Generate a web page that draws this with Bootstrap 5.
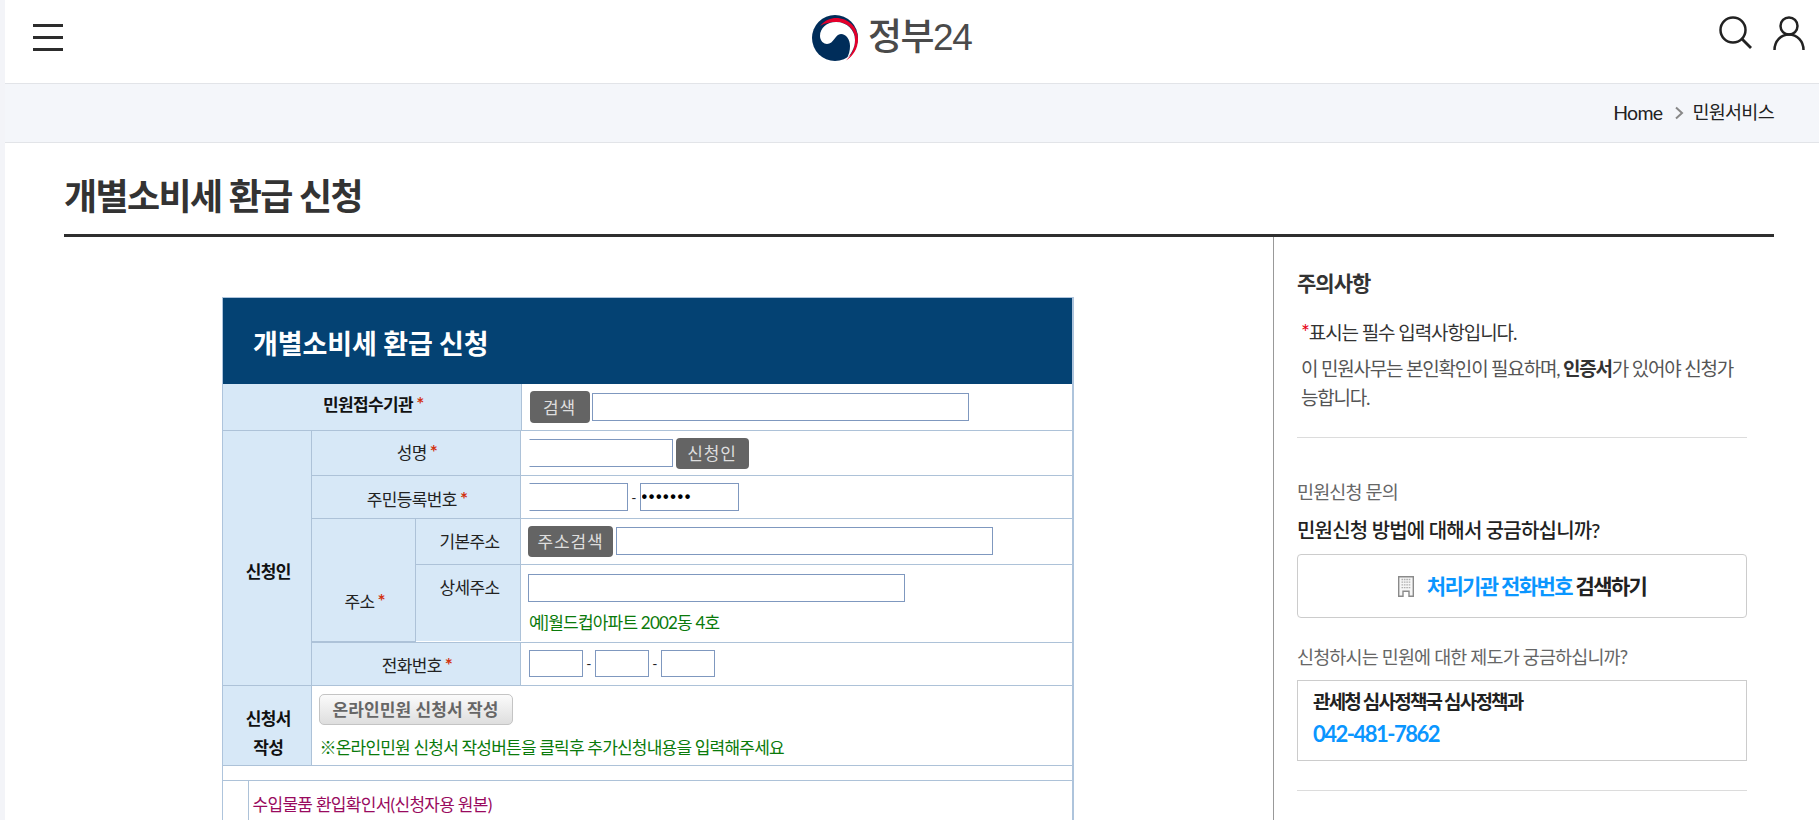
<!DOCTYPE html>
<html lang="ko">
<head>
<meta charset="utf-8">
<title>개별소비세 환급 신청</title>
<link href="https://cdn.jsdelivr.net/npm/bootstrap@5.3.0/dist/css/bootstrap.min.css" rel="stylesheet">
<style>
html,body{height:820px;overflow:hidden;background:#fff;}
body{font-family:"Lato","Noto Sans CJK KR",sans-serif;color:#222;border-left:5px solid #f3f4f8;letter-spacing:-.6px;}
.top-head{height:84px;border-bottom:1px solid #e2e4e8;padding:0 14px 8px 28px;}
.top-left{width:779px;}
.top-right{flex:1;margin-bottom:9px;gap:21px;}
.logo-gap{gap:10px;}
.logo-name{font-size:37px;font-weight:500;color:#4a4a4a;line-height:1;letter-spacing:-1.5px;font-family:"Liberation Sans","Noto Sans CJK KR",sans-serif;}
.crumb-bar{height:59px;background:#f4f6fa;border-bottom:1px solid #e2e4e8;padding-right:45px;font-size:18.500px;color:#222;letter-spacing:-.7px;}
.crumb-home{font-size:19.500px;}
.crumb-sep{margin:0 8px 0 12px;}
.page-area{padding:0 45px 0 59px;}
.page-title{height:94px;border-bottom:3px solid #2e2e2e;margin:0;font-size:36px;font-weight:700;color:#333;letter-spacing:-1.6px;padding-top:26px;line-height:54px;}
.main-col{width:1209px;padding:60px 0 0 158px;flex:none;}
.side-col{flex:1;border-left:1px solid #999;padding:33px 27px 0 23px;height:600px;}
.form-box{width:852px;border:1px solid #aec4dc;border-right-width:2px;}
.form-head{height:86px;background:#044273;color:#fff;font-size:27px;font-weight:700;letter-spacing:-.1px;padding:7px 0 0 30px;}
.form-tb{width:100%;table-layout:fixed;border-collapse:collapse;font-size:17px;}
.form-tb th,.form-tb td{border:1px solid #adc2d8;padding:0;vertical-align:middle;}
.form-tb th{background:#d7e8f7;text-align:center;font-weight:400;color:#222;padding-left:3px;}
.form-tb tr:first-child>*{border-top:0;}
.form-tb tr>:first-child{border-left:0;}
.form-tb tr>:last-child{border-right:0;}
.form-tb tr:last-child>*{border-bottom:0;}
.form-tb th.strong-head{font-weight:700;color:#111;}
.form-tb th.head-org{padding-bottom:4px;}
.form-tb th.head-low{padding-top:5px;}
.line-above{border-top:1px solid #adc2d8;}
.gap-row{height:15px;border-top:1px solid #adc2d8;}
.form-tb th.head-applicant{padding-top:28px;}
.form-tb th.head-write{padding-top:16px;line-height:29px;}
.form-tb th.head-addr{padding-top:44px;}
.form-tb th.head-detail{vertical-align:top;padding-top:10px;}
.req{color:#d2320f;font-weight:700;margin-left:3px;font-size:19px;line-height:0;}
.fld{height:28px;border:1px solid #7f98bf;background:#fff;padding:0 2px;font-size:13px;display:block;outline:0;border-radius:0;letter-spacing:0;font-family:"Liberation Sans",sans-serif;}
.fld-noleft{border-left-color:#fff;}
.fld-long{width:377px;margin-left:2px;}
.fld-long2{width:377px;margin-left:3px;}
.fld-name{width:144px;}
.fld-rrn{width:99px;}
.fld-dots{padding:0 0 0 1px;font-size:16px;font-weight:700;letter-spacing:1.600px;color:#000;}
.fld-detail{width:377px;margin-left:-1px;}
.fld-tel{width:54px;height:27px;}
.btn-dark-mini{background:#646464;color:#dedede;border:0;border-radius:4px;height:32px;font-size:17px;letter-spacing:.8px;padding:0;line-height:1;flex:none;}
.btn-srch{width:60px;}
.btn-app{width:73px;height:31px;margin-left:3px;}
.btn-addr{width:85px;height:31px;margin-left:-1px;}
.btn-pale{height:31px;width:194px;background:linear-gradient(#fbfbfb,#dedede);border:1px solid #c4c4c4;border-radius:5px;font-size:17px;color:#666;font-weight:700;padding:0;letter-spacing:.1px;line-height:1;margin-left:-1px;}
.hint-green{color:#0a7a0a;font-size:17px;line-height:17px;letter-spacing:-.8px;}
.hint-gap1{margin-top:12px;}
.hint-gap2{margin-top:14px;}
.dash{font-size:14px;color:#222;width:12px;text-align:center;flex:none;}
.form-tb td.purple-cell{vertical-align:top;padding:11px 0 0 4px;}
.purple-link{color:#990a5e;font-size:17px;letter-spacing:-.7px;line-height:26px;}
.note-title{font-size:21px;font-weight:700;color:#333;line-height:26px;margin:0 0 22px;letter-spacing:-1px;}
.note-p{font-size:19px;line-height:29px;margin:0 0 7px 4px;color:#333;letter-spacing:-1.1px;}
.note-dim{color:#555;margin-bottom:25px;letter-spacing:-1.2px;}
.note-p b{color:#333;}
.star-red{color:#e60012;font-size:21px;line-height:0;}
.rule-line{border-top:1px solid #dcdcdc;}
.q-small{font-size:18.500px;color:#666;line-height:26px;letter-spacing:-.85px;}
.q-a{margin-top:41px;}
.q-b{margin-top:26px;margin-bottom:10px;}
.q-strong{font-size:20px;font-weight:500;color:#222;line-height:26px;letter-spacing:-.8px;margin:12px 0 11px;}
.search-tel{height:64px;border:1px solid #ccc;border-radius:4px;font-size:21px;font-weight:700;color:#222;letter-spacing:-1.6px;text-decoration:none;gap:13px;}
.accent-blue{color:#0a96ff;}
.tel-box{height:81px;border:1px solid #ccc;padding:6px 15px 0;}
.tel-org{font-size:19px;font-weight:700;color:#222;line-height:30px;letter-spacing:-1.800px;}
.tel-num{font-size:22px;font-weight:700;color:#0a96ff;line-height:34px;letter-spacing:-1.500px;}
.rule-last{margin-top:29px;}
</style>
</head>
<body>
<header class="top-head d-flex align-items-center">
  <div class="top-left">
    <svg class="d-block" width="30" height="27" viewBox="0 0 30 27" aria-label="메뉴"><path d="M0 1.500h30M0 13.500h30M0 25.500h30" stroke="#2c2c2c" stroke-width="3"/></svg>
  </div>
  <div class="d-flex align-items-center logo-gap">
    <svg class="d-block" width="46" height="46" viewBox="0 0 46 46" aria-label="정부 로고">
      <circle cx="23" cy="23" r="23" fill="#002d5a"/>
      <path d="M8 11C13 5 19 3 24 3c12 0 22 9 22 21 0 10-5 17-12 21.500 5-5 9-12 9-21C43 14 35 7 24 7 18 7 13 8 8 11Z" fill="#e4002b"/>
      <path d="M8 21C8 13 15 7 24 7c11 0 19 8 19 18 0 8-4 14-9 20 3-5 4-10 4-14 0-7-4-12-9-12-6 0-7 10-14 10-3 0-7-3-7-8Z" fill="#fff"/>
    </svg>
    <span class="logo-name">정부24</span>
  </div>
  <div class="top-right d-flex justify-content-end">
    <svg class="d-block" width="33" height="33" viewBox="0 0 33 33" aria-label="검색"><circle cx="14" cy="14" r="12.500" fill="none" stroke="#222" stroke-width="2.500"/><path d="M23 23l9 9" stroke="#222" stroke-width="2.800"/></svg>
    <svg class="d-block" width="32" height="34" viewBox="0 0 32 34" aria-label="로그인"><circle cx="16" cy="10" r="8.500" fill="none" stroke="#222" stroke-width="2.500"/><path d="M1.500 34C1.500 25 8 18.500 16 18.500S30.500 25 30.500 34" fill="none" stroke="#222" stroke-width="2.500"/></svg>
  </div>
</header>
<nav class="crumb-bar d-flex align-items-center justify-content-end" aria-label="현재 위치">
  <span class="crumb-home">Home</span>
  <svg class="crumb-sep" width="10" height="14" viewBox="0 0 10 14"><path d="M2 1.500L8 7l-6 5.500" fill="none" stroke="#888" stroke-width="2"/></svg>
  <span>민원서비스</span>
</nav>
<div class="page-area">
  <h1 class="page-title">개별소비세 환급 신청</h1>
  <div class="d-flex">
    <main class="main-col">
      <div class="form-box">
        <div class="form-head d-flex align-items-center">개별소비세 환급 신청</div>
        <table class="form-tb">
          <colgroup><col style="width:298px"><col></colgroup>
          <tr style="height:46px">
            <th class="strong-head head-org">민원접수기관<span class="req">*</span></th>
            <td><div class="d-flex align-items-center ps-2"><button type="button" class="btn-dark-mini btn-srch">검색</button><input class="fld fld-long" type="text"></div></td>
          </tr>
        </table>
        <table class="form-tb line-above">
          <colgroup><col style="width:88px"><col style="width:104px"><col style="width:105px"><col></colgroup>
          <tr style="height:45px">
            <th rowspan="4" class="strong-head head-applicant">신청인</th>
            <th colspan="2">성명<span class="req">*</span></th>
            <td><div class="d-flex align-items-center ps-2"><input class="fld fld-noleft fld-name" type="text"><button type="button" class="btn-dark-mini btn-app">신청인</button></div></td>
          </tr>
          <tr style="height:43px">
            <th colspan="2" class="head-low">주민등록번호<span class="req">*</span></th>
            <td><div class="d-flex align-items-center ps-2"><input class="fld fld-noleft fld-rrn" type="text"><span class="dash">-</span><input class="fld fld-rrn fld-dots" type="text" value="•••••••" aria-label="뒷자리"></div></td>
          </tr>
          <tr style="height:122px">
            <td colspan="3">
              <table class="form-tb">
                <colgroup><col style="width:104px"><col style="width:105px"><col></colgroup>
                <tr style="height:45px">
                  <th rowspan="2" class="head-addr">주소<span class="req">*</span></th>
                  <th>기본주소</th>
                  <td><div class="d-flex align-items-center ps-2"><button type="button" class="btn-dark-mini btn-addr">주소검색</button><input class="fld fld-long2" type="text"></div></td>
                </tr>
                <tr style="height:77px">
                  <th class="head-detail">상세주소</th>
                  <td>
                    <div class="ps-2"><input class="fld fld-detail" type="text"><div class="hint-green hint-gap1">예]월드컵아파트 2002동 4호</div></div>
                  </td>
                </tr>
              </table>
            </td>
          </tr>
          <tr style="height:43px">
            <th colspan="2" class="head-low">전화번호<span class="req">*</span></th>
            <td><div class="d-flex align-items-center ps-2"><input class="fld fld-tel" type="text"><span class="dash">-</span><input class="fld fld-tel" type="text"><span class="dash">-</span><input class="fld fld-tel" type="text"></div></td>
          </tr>
          <tr style="height:80px">
            <th class="strong-head head-write">신청서<br>작성</th>
            <td colspan="3">
              <div class="ps-2"><button type="button" class="btn-pale d-block">온라인민원 신청서 작성</button><div class="hint-green hint-gap2">※온라인민원 신청서 작성버튼을 클릭후 추가신청내용을 입력해주세요</div></div>
            </td>
          </tr>
        </table>
        <div class="gap-row"></div>
        <table class="form-tb line-above">
          <colgroup><col style="width:25px"><col></colgroup>
          <tr style="height:60px">
            <td></td>
            <td class="purple-cell"><span class="purple-link">수입물품 환입확인서(신청자용 원본)</span></td>
          </tr>
        </table>
      </div>
    </main>
    <aside class="side-col">
      <h2 class="note-title">주의사항</h2>
      <p class="note-p"><span class="star-red">*</span>표시는 필수 입력사항입니다.</p>
      <p class="note-p note-dim">이 민원사무는 본인확인이 필요하며, <b>인증서</b>가 있어야 신청가<br>능합니다.</p>
      <div class="rule-line"></div>
      <div class="q-small q-a">민원신청 문의</div>
      <div class="q-strong">민원신청 방법에 대해서 궁금하십니까?</div>
      <a href="#" class="search-tel d-flex align-items-center justify-content-center">
        <svg class="d-block" width="16" height="21" viewBox="0 0 16 21"><path d="M.7.7h14.600v19.600H11v-5H5v5H.7Z" fill="#f6f6f6" stroke="#8a8a8a" stroke-width="1.400"/><path d="M3.500 3.500h9M3.500 6.200h9M3.500 8.900h9M3.500 11.600h9" stroke="#b0b0b0" stroke-width="1.300" stroke-dasharray="1.600 .8"/></svg>
        <span><span class="accent-blue">처리기관 전화번호</span> 검색하기</span>
      </a>
      <div class="q-small q-b">신청하시는 민원에 대한 제도가 궁금하십니까?</div>
      <div class="tel-box">
        <div class="tel-org">관세청 심사정책국 심사정책과</div>
        <div class="tel-num">042-481-7862</div>
      </div>
      <div class="rule-line rule-last"></div>
    </aside>
  </div>
</div>
</body>
</html>
